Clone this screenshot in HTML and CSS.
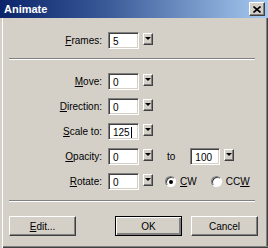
FILE: index.html
```html
<!DOCTYPE html>
<html lang="en">

<head>
    <meta charset="UTF-8" />
    <title>Animate</title>
    <link rel="stylesheet" href="styles.css">
</head>

<body>
    <div class="window">
        <div class="titlebar">
            <span class="title">Animate</span>
            <span class="close-btn">
                <svg width="8" height="7" viewBox="0 0 8 7">
                    <path d="M0.5 0.5 L7.5 6.5 M7.5 0.5 L0.5 6.5" stroke="#000" stroke-width="1.6" />
                </svg>
            </span>
        </div>

        <div class="dialog">
            <div class="row">
                <span class="lbl"><u>F</u>rames:</span>
                <span class="field">5</span>
                <span class="drop"></span>
            </div>

            <div class="sep top-sep"></div>

            <div class="row">
                <span class="lbl"><u>M</u>ove:</span>
                <span class="field">0</span>
                <span class="drop"></span>
            </div>
            <div class="row">
                <span class="lbl"><u>D</u>irection:</span>
                <span class="field">0</span>
                <span class="drop"></span>
            </div>
            <div class="row">
                <span class="lbl"><u>S</u>cale to:</span>
                <span class="field">125<i class="caret"></i></span>
                <span class="drop"></span>
            </div>
            <div class="row">
                <span class="lbl"><u>O</u>pacity:</span>
                <span class="field">0</span>
                <span class="drop"></span>
                <span class="to">to</span>
                <span class="field small">100</span>
                <span class="drop"></span>
            </div>
            <div class="row">
                <span class="lbl"><u>R</u>otate:</span>
                <span class="field">0</span>
                <span class="drop"></span>
                <span class="radio checked"></span>
                <span class="radio-lbl"><u>C</u>W</span>
                <span class="radio"></span>
                <span class="radio-lbl">CC<u>W</u></span>
            </div>

            <div class="sep bottom-sep"></div>

            <div class="buttons">
                <span class="btn"><u>E</u>dit...</span>
                <span class="spacer"></span>
                <span class="btn default">OK</span>
                <span class="btn">Cancel</span>
            </div>
        </div>
    </div>
</body>

</html>
```

FILE: styles.css
```css
/* ====== window ====== */
body {
    margin: 0;
    font-family: 'Liberation Sans', Arial, sans-serif;
    font-size: 10px;
    color: #000;
}

.window {
    width: 268px;
    height: 248px;
    box-sizing: border-box;
    background: #d4d0c8;
    display: flex;
    flex-direction: column;
    box-shadow: inset 2px 0 0 #d4d0c8, inset 3px 0 0 #fff,
        inset 0 -1px 0 #404040, inset 0 -2px 0 #808080,
        inset -1px 0 0 #404040, inset -2px 0 0 #808080;
}

.titlebar {
    height: 18px;
    display: flex;
    align-items: center;
    justify-content: space-between;
    padding: 0 3px 0 4px;
    background: linear-gradient(90deg, #0a246a 0%, #3a5a98 40%, #a6caf0 100%);
}

.title {
    color: #fff;
    font-weight: bold;
    font-size: 11px;
}

.close-btn {
    width: 16px;
    height: 14px;
    box-sizing: border-box;
    background: #d4d0c8;
    border: 1px solid;
    border-color: #fff #404040 #404040 #fff;
    box-shadow: inset -1px -1px 0 #808080;
    display: flex;
    align-items: center;
    justify-content: center;
}

/* ====== form ====== */
.dialog {
    flex: 1;
    display: flex;
    flex-direction: column;
    padding-top: 14px;
}

.row {
    display: flex;
    align-items: center;
    height: 17px;
    margin-bottom: 8px;
}

.lbl {
    width: 102px;
    text-align: right;
    margin-right: 6px;
}

.field {
    width: 31px;
    height: 17px;
    box-sizing: border-box;
    background: #fff;
    border: 1px solid;
    border-color: #808080 #fff #fff #808080;
    box-shadow: inset 1px 1px 0 #404040, inset -1px -1px 0 #d4d0c8;
    padding: 3px 0 0 4px;
    line-height: 11px;
    display: flex;
}

.caret {
    width: 1px;
    height: 11px;
    background: #000;
    margin-left: 1px;
}

.drop {
    width: 10px;
    height: 12px;
    box-sizing: border-box;
    margin: -4px 0 0 4px;
    background: #d4d0c8;
    border: 1px solid;
    border-color: #fff #404040 #404040 #fff;
    box-shadow: inset -1px -1px 0 #808080;
    position: relative;
}

.drop:after {
    content: '';
    position: absolute;
    left: 1px;
    top: 3px;
    border-left: 3px solid transparent;
    border-right: 3px solid transparent;
    border-top: 3px solid #000;
}

.to {
    margin: 0 15px 0 14px;
}

.field.small {
    width: 30px;
}

.radio {
    width: 11px;
    height: 11px;
    box-sizing: border-box;
    border-radius: 50%;
    background: #fff;
    border: 1px solid;
    border-color: #808080 #fff #fff #808080;
    box-shadow: inset 1px 1px 0 #404040;
    margin: 0 4px 0 12px;
    display: flex;
    align-items: center;
    justify-content: center;
}

.radio.checked:after {
    content: '';
    width: 4px;
    height: 4px;
    border-radius: 50%;
    background: #000;
}

.radio-lbl {
    margin-right: 2px;
}

.sep {
    height: 1px;
    margin: 0 13px 0 9px;
    border-top: 1px solid #808080;
    border-bottom: 1px solid #fff;
    height: 0;
}

.top-sep {
    margin-top: 1px;
    margin-bottom: 13px;
}

.bottom-sep {
    margin-top: 2px;
    margin-bottom: 14px;
}

/* ====== buttons ====== */
.buttons {
    display: flex;
    padding: 0 10px 0 9px;
}

.spacer {
    flex: 1;
}

.btn {
    width: 67px;
    height: 20px;
    box-sizing: border-box;
    border: 1px solid;
    border-color: #fff #404040 #404040 #fff;
    box-shadow: inset -1px -1px 0 #808080;
    display: flex;
    align-items: center;
    justify-content: center;
}

.btn.default {
    margin-right: 9px;
    border-color: #000;
    box-shadow: inset 1px 1px 0 #fff, inset -2px -2px 0 #808080;
}
```
